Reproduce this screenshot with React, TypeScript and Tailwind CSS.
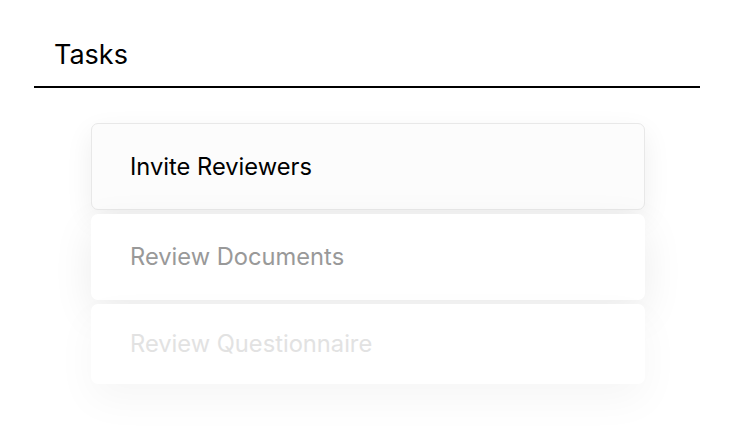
const tasks = [
  { label: "Invite Reviewers", state: "active" },
  { label: "Review Documents", state: "next" },
  { label: "Review Questionnaire", state: "later" },
];

export default function App() {
  return (
    <div className="h-[430px] w-[736px] bg-white font-['Inter',sans-serif]">
      <div className="pl-[34px] pr-[36px] pt-[39px]">
        <h1 className="border-b-2 border-black pb-[15px] pl-[20px] text-[27px] leading-[32px] text-black">
          Tasks
        </h1>
      </div>
      <div className="flex flex-col gap-[4px] pl-[91px] pr-[91px] pt-[35px]">
        {tasks.map((task) => (
          <div
            key={task.label}
            className={
              task.state === "active"
                ? "flex h-[87px] items-center rounded-[7px] border border-[#e8e8e8] bg-[#fcfcfc] pl-[38px] shadow-[0_10px_28px_rgba(0,0,0,0.07)]"
                : task.state === "next"
                  ? "flex h-[86px] items-center rounded-[7px] bg-white pl-[39px] shadow-[0_14px_40px_rgba(0,0,0,0.08)]"
                  : "flex h-[80px] items-center rounded-[7px] bg-white pl-[39px] shadow-[0_16px_40px_rgba(0,0,0,0.04)]"
            }
          >
            <span
              className={
                task.state === "active"
                  ? "text-[23.7px] text-black"
                  : task.state === "next"
                    ? "text-[23.7px] text-[#999999]"
                    : "text-[23.7px] text-[#e2e2e2]"
              }
            >
              {task.label}
            </span>
          </div>
        ))}
      </div>
    </div>
  );
}
